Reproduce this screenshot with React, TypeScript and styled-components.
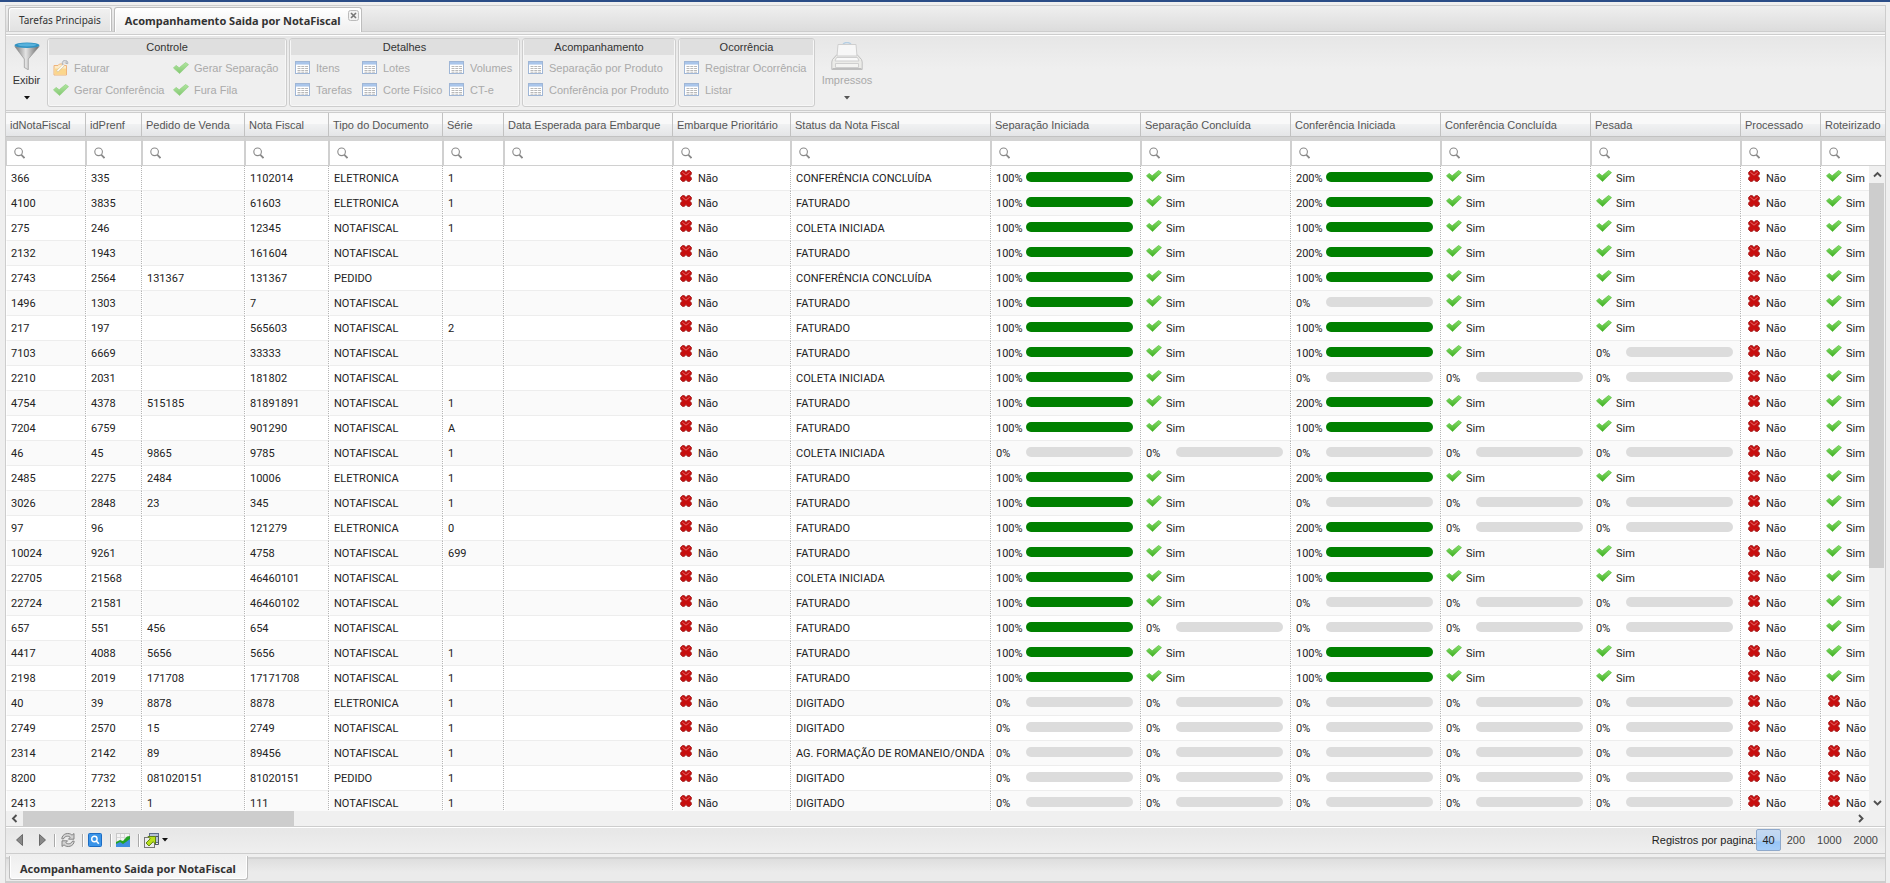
import React from "react";
import styled, { createGlobalStyle, css } from "styled-components";

const GlobalStyle = createGlobalStyle`
  *, *::before, *::after { box-sizing: border-box; }
  html, body { margin: 0; padding: 0; }
  body {
    background: #efefef;
    color: #222;
    font-family: "Liberation Sans", Arial, sans-serif;
    font-size: 11px;
    overflow: hidden;
  }
  button, input { font: inherit; color: inherit; }
  button { margin: 0; padding: 0; border: 0; background: none; cursor: pointer; }
  button:disabled { cursor: default; }
`;

const line = "#cdcdcd";

const Shell = styled.div`
  height: 100vh;
  display: flex;
  flex-direction: column;
  border-top: 2px solid #2b4d87;
  padding: 3px 4px 0 5px;
`;

const Panel = styled.main`
  flex: 1;
  min-height: 0;
  display: flex;
  flex-direction: column;
  border: 1px solid ${line};
  border-bottom-width: 2px;
`;

const TabStrip = styled.nav`
  display: flex;
  align-items: flex-end;
  gap: 2px;
  height: 26px;
  padding: 0 2px;
  border-bottom: 1px solid ${line};
  background: linear-gradient(#efefef, #dcdcdc);
`;

const Tab = styled.button<{ $active?: boolean }>`
  display: flex;
  align-items: center;
  height: 24px;
  padding: 0 10px;
  border: 1px solid #bdbdbd;
  border-bottom: 0;
  border-radius: 3px 3px 0 0;
  box-shadow: inset 1px 1px 0 #fff, inset -1px 0 0 #fff;
  background: linear-gradient(#f1f1f1, #e2e2e2);
  font-family: "Noto Sans", "Open Sans", sans-serif;
  font-size: 10px;
  color: #333;
  white-space: nowrap;
  ${(p) =>
    p.$active &&
    css`
      margin-bottom: -1px;
      height: 25px;
      padding: 0 2px 0 10px;
      background: linear-gradient(#fff, #efefef);
      font-weight: 700;
      font-size: 11px;
    `}
`;

const CloseMark = styled.span`
  align-self: flex-start;
  display: flex;
  margin: 2px 0 0 7px;
`;

const Ribbon = styled.div`
  display: flex;
  height: 77px;
  margin-top: 2px;
  border-top: 1px solid ${line};
  border-bottom: 1px solid ${line};
  box-shadow: inset 0 1px 0 #fff;
  background: linear-gradient(#e6e6e6, #efefef 45%);
  padding: 3px 4px 3px 2px;
  gap: 2px;
`;

const BigButton = styled.button<{ $wide?: boolean }>`
  width: ${(p) => (p.$wide ? 60 : 37)}px;
  display: flex;
  flex-direction: column;
  align-items: center;
  padding-top: 4px;
  line-height: 14px;
  color: #333;
  &:disabled { color: #aaa; }
  & > svg:first-child { margin-bottom: 3px; }
  & > svg:last-child { margin-top: 9px; }
`;

const Group = styled.fieldset<{ $width: number }>`
  width: ${(p) => p.$width}px;
  min-width: 0;
  margin: 0;
  padding: 0 1px 1px;
  border: 1px solid ${line};
  border-radius: 3px;
  background: #efefef;
  box-shadow: inset 0 0 0 1px #f7f7f7;
`;

const GroupTitle = styled.div`
  height: 16px;
  line-height: 16px;
  text-align: center;
  background: #dfdfdf;
  color: #333;
`;

const Items = styled.div<{ $columns: string }>`
  display: grid;
  grid-template-columns: ${(p) => p.$columns};
  grid-auto-rows: 22px;
  padding: 2px 0 0 4px;
`;

const Item = styled.button`
  display: flex;
  align-items: center;
  gap: 5px;
  color: #aaa;
  white-space: nowrap;
`;

const Grid = styled.section`
  flex: 1;
  min-height: 0;
  display: flex;
  flex-direction: column;
  margin-top: 1px;
  border-top: 1px solid ${line};
  background: #fff;
`;

const HeadClip = styled.div`
  overflow: hidden;
  flex: none;
`;

const Body = styled.div`
  flex: 1;
  min-height: 0;
  display: flex;
`;

const BodyClip = styled.div`
  flex: 1;
  min-width: 0;
  overflow: hidden;
`;

const Table = styled.table`
  table-layout: fixed;
  width: 1895px;
  border-collapse: separate;
  border-spacing: 0;
`;

const HeadCell = styled.th`
  height: 24px;
  padding: 0 0 0 4px;
  border-right: 1px solid #c2c2c2;
  border-bottom: 1px solid #c2c2c2;
  background: linear-gradient(#f9f9f9 50%, #f0f1f2 50%, #e4e5e7);
  text-align: left;
  font-weight: 400;
  color: #555;
  white-space: nowrap;
`;

const FilterCell = styled.td`
  height: 29px;
  padding: 0;
  border-top: 4px solid #d4d4d4;
  border-bottom: 1px solid #d0d0d0;
  border-right: 1px solid #d0d0d0;
  border-left: 1px solid #d0d0d0;
  background: #fff;
`;

const Search = styled.label`
  display: flex;
  align-items: center;
  height: 24px;
  padding-left: 7px;
`;

const SearchBox = styled.input`
  flex: 1;
  min-width: 0;
  border: 0;
  outline: 0;
  background: transparent;
`;

const Row = styled.tr`
  background: #fff;
  &:nth-child(even) { background: #fafafa; }
`;

const Cell = styled.td`
  height: 25px;
  padding: 0 0 0 4px;
  border-left: 1px solid #fff;
  border-right: 1px dotted #b5b5b5;
  border-bottom: 1px solid #ededed;
  font-family: Roboto, "Liberation Sans", sans-serif;
  white-space: nowrap;
  overflow: hidden;
`;

const Flag = styled.span<{ $yes: boolean }>`
  display: flex;
  align-items: center;
  gap: ${(p) => (p.$yes ? 4 : 6)}px;
  padding-left: ${(p) => (p.$yes ? 0 : 2)}px;
  & > svg { margin-bottom: 4px; }
`;

const Progress = styled.span`
  display: grid;
  grid-template-columns: 30px 107px;
  align-items: center;
`;

const Bar = styled.span<{ $full: boolean }>`
  height: 10px;
  margin-bottom: 2px;
  border-radius: 5px;
  background: ${(p) => (p.$full ? "#008000" : "#dcdcdc")};
`;

const VScroll = styled.div`
  width: 16px;
  display: flex;
  flex-direction: column;
  background: #f0f0f0;
`;

const HScroll = styled.div`
  height: 15px;
  display: flex;
  background: #f0f0f0;
  padding-right: 16px;
`;

const ScrollButton = styled.button`
  flex: none;
  width: 17px;
  height: 17px;
  display: flex;
  align-items: center;
  justify-content: center;
  ${HScroll} & { height: 15px; }
  ${VScroll} & { width: 16px; }
`;

const Track = styled.div`
  flex: 1;
`;

const VThumb = styled.div`
  height: 63%;
  margin-right: 1px;
  background: #cdcdcd;
`;

const HThumb = styled.div`
  width: 271px;
  height: 100%;
  background: #cdcdcd;
`;

const Pager = styled.div`
  display: flex;
  align-items: center;
  justify-content: space-between;
  height: 28px;
  padding: 0 1px 0 2px;
  border-top: 1px solid ${line};
  border-bottom: 1px solid ${line};
  box-shadow: inset 0 1px 0 #fff;
  background: linear-gradient(#e6e6e6, #efefef);
`;

const Tools = styled.div`
  display: flex;
  align-items: center;
`;

const Tool = styled.button<{ $separated?: boolean }>`
  display: flex;
  align-items: center;
  justify-content: center;
  min-width: 23px;
  height: 16px;
  ${(p) =>
    p.$separated &&
    css`
      justify-content: flex-start;
      min-width: 28px;
      &::before {
        content: "";
        width: 1px;
        height: 13px;
        margin-right: 5px;
        background: #a9a9a9;
        box-shadow: 1px 0 0 #fff;
      }
      & > svg + svg { margin-left: 2px; }
    `}
`;

const PageSize = styled.button<{ $active?: boolean }>`
  height: 22px;
  padding: 0 5px;
  border: 1px solid transparent;
  border-radius: 2px;
  color: #444;
  ${(p) =>
    p.$active &&
    css`
      border-color: #8fa9cb;
      background: linear-gradient(#c5d9f0, #b9d4f2 50%, #98c6f8 60%, #a6cdf8);
      color: #222;
    `}
`;

const BottomStrip = styled.footer`
  height: 24px;
  margin-top: 3px;
  padding-left: 3px;
  border-top: 2px solid #d2d2d2;
  background: linear-gradient(#dedede, #ebebeb 60%);
`;

const BottomTab = styled.button`
  display: flex;
  align-items: center;
  height: 24px;
  margin-top: -3px;
  padding: 2px 11px 0 10px;
  border: 1px solid #bdbdbd;
  border-top: 0;
  border-radius: 0 0 3px 3px;
  box-shadow: inset 1px 0 0 #fff, inset -1px -1px 0 #fff;
  background: linear-gradient(#efefef, #f8f8f8);
  font-family: "Noto Sans", "Open Sans", sans-serif;
  font-size: 11px;
  font-weight: 700;
  color: #333;
  white-space: nowrap;
`;

const Check = ({ faded }: { faded?: boolean }) => (
  <svg width="16" height="12" viewBox="0 0 16 12" opacity={faded ? 0.6 : 1} aria-hidden="true">
    <defs>
      <linearGradient id="leaf" x1="0" y1="0" x2="0" y2="1">
        <stop offset="0" stopColor="#86e06a" />
        <stop offset="1" stopColor="#3fae22" />
      </linearGradient>
    </defs>
    <path d="M.5 6 3 3.400 6.200 5.800 12.600.5 15.500 2.600 6.600 11.500Z" fill="url(#leaf)" stroke="#5cc043" strokeWidth=".8" strokeLinejoin="round" />
  </svg>
);

const Cross = () => (
  <svg width="12" height="12" viewBox="0 0 12 12" aria-hidden="true">
    <path
      d="M2.5.5 4.5.7 6 2.6 7.5.7 9.5.5 11.5 2.5 11.2 4.4 9.6 6 11.2 7.6 11.5 9.5 9.5 11.5 7.5 11.3 6 9.6 4.5 11.3 2.5 11.5.5 9.5.8 7.6 2.4 6 .8 4.4.5 2.5Z"
      fill="#c80f0f"
      stroke="#9c1616"
      strokeWidth=".8"
      strokeLinejoin="round"
    />
    <path d="M2.3 2.2 6 5.2 9.7 2.2" fill="none" stroke="#e66a6a" strokeWidth="1" />
  </svg>
);

const Magnifier = () => (
  <svg width="11" height="12" viewBox="0 0 11 12" fill="none" stroke="#8a8a8a" aria-hidden="true">
    <circle cx="4.6" cy="4.8" r="3.8" strokeWidth="1.1" />
    <path d="M7.4 7.8 10.5 11" strokeWidth="1.8" />
  </svg>
);

const TableIcon = () => (
  <svg width="16" height="14" viewBox="0 0 16 14" aria-hidden="true">
    <rect x=".5" y=".5" width="14" height="12" fill="#fff" stroke="#9fb6d6" />
    <path d="M1 1h13v2.6H1z" fill="#a9c5ea" />
    <path d="M2.500 5.500h10.500M2.500 7.500h10.500M2.500 9.500h10.500M2.500 11.200h10.500" stroke="#b8b8b8" strokeDasharray="3 .8" />
  </svg>
);

const FolderIcon = () => (
  <svg width="16" height="16" viewBox="0 0 16 16" aria-hidden="true">
    <path d="M1 5.500h4l1.500-1.500h4l.5 1.500h2.500v9.500H1z" fill="#fdebc8" stroke="#eeb47c" />
    <path d="M1.500 8.500h11.500v6H1.500z" fill="#fbd68c" />
    <path d="M4 11.500 10.500 5.500" stroke="#d9c9a4" strokeWidth="2.400" />
    <path d="M4.500 11 11 4.800" stroke="#fff" strokeWidth="1.200" />
    <path d="M10.200 5.200a2.800 2.800 0 1 1 4.600-1.600L12.800 3.500l.4-2.200" fill="#ddd" stroke="#aeb2ba" />
  </svg>
);

const Funnel = () => (
  <svg width="26" height="28" viewBox="0 0 26 28" aria-hidden="true">
    <defs>
      <linearGradient id="steel">
        <stop offset="0" stopColor="#777" />
        <stop offset=".45" stopColor="#e4e4e4" />
        <stop offset="1" stopColor="#666" />
      </linearGradient>
    </defs>
    <path d="M.8 4.500 10.300 17v8.500l4 2.300V17L25.200 4.500Z" fill="url(#steel)" stroke="#8a8a8a" strokeWidth=".6" />
    <ellipse cx="13" cy="3.300" rx="12.500" ry="2.800" fill="#3192c2" />
    <ellipse cx="13" cy="2.800" rx="9.500" ry="1.600" fill="#58b2dc" />
  </svg>
);

const Printer = () => (
  <svg width="32" height="28" viewBox="0 0 32 28" stroke="#cfcfcf" aria-hidden="true">
    <path d="M12 2Q16-.8 20 2" fill="none" stroke="#b5cfe4" strokeWidth="1.500" />
    <path d="M6 12.500 1.500 17.500.8 20v7.500h30.400V20l-.7-2.500L26 12.500z" fill="#ebebe8" stroke="#bfbfbf" />
    <path d="M7 2.500h18l1 11.500H6z" fill="#f7f7f7" />
    <path d="M5.500 15.500h21l1.500 3.500H4z" fill="#fafafa" />
    <path d="M4.500 21.500h23v4h-23z" fill="#f4f4f2" />
    <path d="M1.500 26.500h29" stroke="#bdbdbd" />
  </svg>
);

const Caret = ({ color = "#111" }: { color?: string }) => (
  <svg width="6" height="4" viewBox="0 0 6 4" aria-hidden="true">
    <path d="M0 0h6L3 3.500z" fill={color} />
  </svg>
);

const PageArrow = ({ next }: { next?: boolean }) => (
  <svg width="7" height="12" viewBox="0 0 7 12" aria-hidden="true">
    <path d={next ? "M.5.5v11L6.500 6z" : "M6.500.5v11L.5 6z"} fill="#888" stroke="#555" strokeWidth=".8" />
  </svg>
);

const Chevron = ({ d }: { d: string }) => (
  <svg width="9" height="9" viewBox="0 0 9 9" fill="none" stroke="#505050" strokeWidth="1.900" aria-hidden="true">
    <path d={d} />
  </svg>
);

const Refresh = () => (
  <svg width="16" height="16" viewBox="0 0 16 16" aria-hidden="true">
    <g fill="#d2d2d2" stroke="#707070" strokeWidth=".8" strokeLinejoin="round">
      <path d="M1.800 6.800C2 1.600 9-.2 12 3.200L14 1.500V7.200H8.500L10.200 5.200C8.500 3.600 4.800 3.800 3.400 7Z" />
      <path d="M14.200 9.200C14 14.400 7 16.200 4 12.800L2 14.500V8.800H7.500L5.800 10.800C7.500 12.400 11.200 12.200 12.600 9Z" />
    </g>
  </svg>
);

const ViewIcon = () => (
  <svg width="14" height="14" viewBox="0 0 14 14" fill="none" aria-hidden="true">
    <rect x=".5" y=".5" width="13" height="13" rx="1" fill="#3a94e8" stroke="#1c6cc4" />
    <circle cx="6.400" cy="6" r="2.700" stroke="#fff" strokeWidth="1.400" />
    <path d="M8.300 8 10.800 10.800" stroke="#fff" strokeWidth="1.600" />
  </svg>
);

const ChartIcon = () => (
  <svg width="14" height="14" viewBox="0 0 14 14" aria-hidden="true">
    <rect x=".5" y=".5" width="13" height="13" fill="#f4f4f4" stroke="#c9c9c9" />
    <path d="M1 4.500h12M4.500 1v12M8.500 1v12" stroke="#d8d8d8" />
    <path d="M0 10 4 8.500 8 9.500 14 5.500V14H0z" fill="#3f8ee0" />
    <path d="M0 9 4 7 7 8 11 3.500 14 3V6L10 9 7 11 4 9 0 11z" fill="#24a325" />
  </svg>
);

const ExportIcon = () => (
  <svg width="16" height="15" viewBox="0 0 16 15" aria-hidden="true">
    <rect x="5.500" y=".5" width="9" height="9" fill="#b5c0d6" stroke="#5e6c8c" />
    <path d="M11.500 3.500h3v8h-8" fill="none" stroke="#4d5566" />
    <rect x=".5" y="4.500" width="10" height="10" fill="#ececec" stroke="#777" />
    <path d="M4 3.500h7.500V11L9.200 8.700 5 13 2 10l4.200-4.200z" fill="#b8e01c" stroke="#56790b" strokeWidth=".9" strokeLinejoin="round" />
  </svg>
);

const CloseIcon = () => (
  <svg width="11" height="11" viewBox="0 0 11 11" aria-hidden="true">
    <rect x=".5" y=".5" width="10" height="10" rx="2" fill="#f2f2f2" stroke="#bbb" />
    <path d="M3 3l5 5M8 3l-5 5" stroke="#777" strokeWidth="1.600" />
  </svg>
);

type GroupDef = { title: string; width: number; columns: string; items: [React.ReactNode, string][] };

const groups: GroupDef[] = [
  {
    title: "Controle",
    width: 240,
    columns: "120px auto",
    items: [
      [<FolderIcon />, "Faturar"],
      [<Check faded />, "Gerar Separação"],
      [<Check faded />, "Gerar Conferência"],
      [<Check faded />, "Fura Fila"],
    ],
  },
  {
    title: "Detalhes",
    width: 231,
    columns: "67px 87px auto",
    items: [
      [<TableIcon />, "Itens"],
      [<TableIcon />, "Lotes"],
      [<TableIcon />, "Volumes"],
      [<TableIcon />, "Tarefas"],
      [<TableIcon />, "Corte Físico"],
      [<TableIcon />, "CT-e"],
    ],
  },
  {
    title: "Acompanhamento",
    width: 154,
    columns: "auto",
    items: [
      [<TableIcon />, "Separação por Produto"],
      [<TableIcon />, "Conferência por Produto"],
    ],
  },
  {
    title: "Ocorrência",
    width: 137,
    columns: "auto",
    items: [
      [<TableIcon />, "Registrar Ocorrência"],
      [<TableIcon />, "Listar"],
    ],
  },
];

const columns: [string, number][] = [
  ["idNotaFiscal", 80],
  ["idPrenf", 56],
  ["Pedido de Venda", 103],
  ["Nota Fiscal", 84],
  ["Tipo do Documento", 114],
  ["Série", 61],
  ["Data Esperada para Embarque", 169],
  ["Embarque Prioritário", 118],
  ["Status da Nota Fiscal", 200],
  ["Separação Iniciada", 150],
  ["Separação Concluída", 150],
  ["Conferência Iniciada", 150],
  ["Conferência Concluída", 150],
  ["Pesada", 150],
  ["Processado", 80],
  ["Roteirizado", 80],
];

const N = "NOTAFISCAL";
const E = "ELETRONICA";
const P = "PEDIDO";
const F = "FATURADO";
const CC = "CONFERÊNCIA CONCLUÍDA";
const CI = "COLETA INICIADA";
const D = "DIGITADO";

// id, pre-note, order, invoice, document, series, status, and the stages:
// separation started/done, checking started/done, weighed, routed.
// A stage is "S" (yes), "N" (no) or a percentage.
type Note = [string, string, string, string, string, string, string, string];

const notes: Note[] = [
  ["366", "335", "", "1102014", E, "1", CC, "100 S 200 S S S"],
  ["4100", "3835", "", "61603", E, "1", F, "100 S 200 S S S"],
  ["275", "246", "", "12345", N, "1", CI, "100 S 100 S S S"],
  ["2132", "1943", "", "161604", N, "", F, "100 S 200 S S S"],
  ["2743", "2564", "131367", "131367", P, "", CC, "100 S 100 S S S"],
  ["1496", "1303", "", "7", N, "", F, "100 S 0 S S S"],
  ["217", "197", "", "565603", N, "2", F, "100 S 100 S S S"],
  ["7103", "6669", "", "33333", N, "", F, "100 S 100 S 0 S"],
  ["2210", "2031", "", "181802", N, "", CI, "100 S 0 0 0 S"],
  ["4754", "4378", "515185", "81891891", N, "1", F, "100 S 200 S S S"],
  ["7204", "6759", "", "901290", N, "A", F, "100 S 100 S S S"],
  ["46", "45", "9865", "9785", N, "1", CI, "0 0 0 0 0 S"],
  ["2485", "2275", "2484", "10006", E, "1", F, "100 S 200 S S S"],
  ["3026", "2848", "23", "345", N, "1", F, "100 S 0 0 0 S"],
  ["97", "96", "", "121279", E, "0", F, "100 S 200 0 0 S"],
  ["10024", "9261", "", "4758", N, "699", F, "100 S 100 S S S"],
  ["22705", "21568", "", "46460101", N, "", CI, "100 S 100 S S S"],
  ["22724", "21581", "", "46460102", N, "", F, "100 S 0 0 0 S"],
  ["657", "551", "456", "654", N, "", F, "100 0 0 0 0 S"],
  ["4417", "4088", "5656", "5656", N, "1", F, "100 S 100 S S S"],
  ["2198", "2019", "171708", "17171708", N, "1", F, "100 S 100 S S S"],
  ["40", "39", "8878", "8878", E, "1", D, "0 0 0 0 0 N"],
  ["2749", "2570", "15", "2749", N, "1", D, "0 0 0 0 0 N"],
  ["2314", "2142", "89", "89456", N, "1", "AG. FORMAÇÃO DE ROMANEIO/ONDA", "0 0 0 0 0 N"],
  ["8200", "7732", "081020151", "81020151", P, "1", D, "0 0 0 0 0 N"],
  ["2413", "2213", "1", "111", N, "1", D, "0 0 0 0 0 N"],
];

const Stage = ({ value }: { value: string }) => {
  if (value === "S" || value === "N") {
    const yes = value === "S";
    return (
      <Flag $yes={yes}>
        {yes ? <Check /> : <Cross />}
        {yes ? "Sim" : "Não"}
      </Flag>
    );
  }
  return (
    <Progress>
      {value}%
      <Bar $full={value !== "0"} />
    </Progress>
  );
};

const Columns = () => (
  <colgroup>
    {columns.map(([name, width]) => (
      <col key={name} width={width} />
    ))}
  </colgroup>
);

const NoteRow = ({ note }: { note: Note }) => {
  const stages = note[7].split(" ");
  return (
    <Row>
      {note.slice(0, 6).map((text, i) => (
        <Cell key={i}>{text}</Cell>
      ))}
      <Cell />
      <Cell><Stage value="N" /></Cell>
      <Cell>{note[6]}</Cell>
      {stages.slice(0, 5).map((value, i) => (
        <Cell key={i}><Stage value={value} /></Cell>
      ))}
      <Cell><Stage value="N" /></Cell>
      <Cell><Stage value={stages[5]} /></Cell>
    </Row>
  );
};

export default function App() {
  return (
    <>
      <GlobalStyle />
      <Shell>
        <Panel>
          <TabStrip>
            <Tab>Tarefas Principais</Tab>
            <Tab $active>
              Acompanhamento Saida por NotaFiscal
              <CloseMark><CloseIcon /></CloseMark>
            </Tab>
          </TabStrip>

          <Ribbon>
            <BigButton>
              <Funnel />
              Exibir
              <Caret />
            </BigButton>
            {groups.map((group) => (
              <Group key={group.title} $width={group.width} aria-label={group.title}>
                <GroupTitle>{group.title}</GroupTitle>
                <Items $columns={group.columns}>
                  {group.items.map(([icon, label]) => (
                    <Item key={label} disabled>
                      {icon}
                      {label}
                    </Item>
                  ))}
                </Items>
              </Group>
            ))}
            <BigButton $wide disabled>
              <Printer />
              Impressos
              <Caret color="#555" />
            </BigButton>
          </Ribbon>

          <Grid>
            <HeadClip>
              <Table>
                <Columns />
                <thead>
                  <tr>
                    {columns.map(([name]) => (
                      <HeadCell key={name}>{name}</HeadCell>
                    ))}
                  </tr>
                  <tr>
                    {columns.map(([name]) => (
                      <FilterCell key={name}>
                        <Search>
                          <Magnifier />
                          <SearchBox aria-label={name} />
                        </Search>
                      </FilterCell>
                    ))}
                  </tr>
                </thead>
              </Table>
            </HeadClip>
            <Body>
              <BodyClip>
                <Table>
                  <Columns />
                  <tbody>
                    {notes.map((note) => (
                      <NoteRow key={note[0]} note={note} />
                    ))}
                  </tbody>
                </Table>
              </BodyClip>
              <VScroll>
                <ScrollButton aria-label="Acima"><Chevron d="M1 6.500 4.500 3 8 6.500" /></ScrollButton>
                <Track><VThumb /></Track>
                <ScrollButton aria-label="Abaixo"><Chevron d="M1 3 4.500 6.500 8 3" /></ScrollButton>
              </VScroll>
            </Body>
            <HScroll>
              <ScrollButton aria-label="Esquerda"><Chevron d="M6.500 1 3 4.500 6.500 8" /></ScrollButton>
              <Track><HThumb /></Track>
              <ScrollButton aria-label="Direita"><Chevron d="M3 1 6.500 4.500 3 8" /></ScrollButton>
            </HScroll>
          </Grid>

          <Pager>
            <Tools>
              <Tool aria-label="Anterior"><PageArrow /></Tool>
              <Tool aria-label="Próxima"><PageArrow next /></Tool>
              <Tool $separated aria-label="Atualizar"><Refresh /></Tool>
              <Tool $separated aria-label="Visualizar"><ViewIcon /></Tool>
              <Tool $separated aria-label="Gráfico"><ChartIcon /></Tool>
              <Tool $separated aria-label="Exportar">
                <ExportIcon />
                <Caret />
              </Tool>
            </Tools>
            <Tools>
              Registros por pagina:
              <PageSize $active>40</PageSize>
              <PageSize>200</PageSize>
              <PageSize>1000</PageSize>
              <PageSize>2000</PageSize>
            </Tools>
          </Pager>

          <BottomStrip>
            <BottomTab>Acompanhamento Saida por NotaFiscal</BottomTab>
          </BottomStrip>
        </Panel>
      </Shell>
    </>
  );
}
